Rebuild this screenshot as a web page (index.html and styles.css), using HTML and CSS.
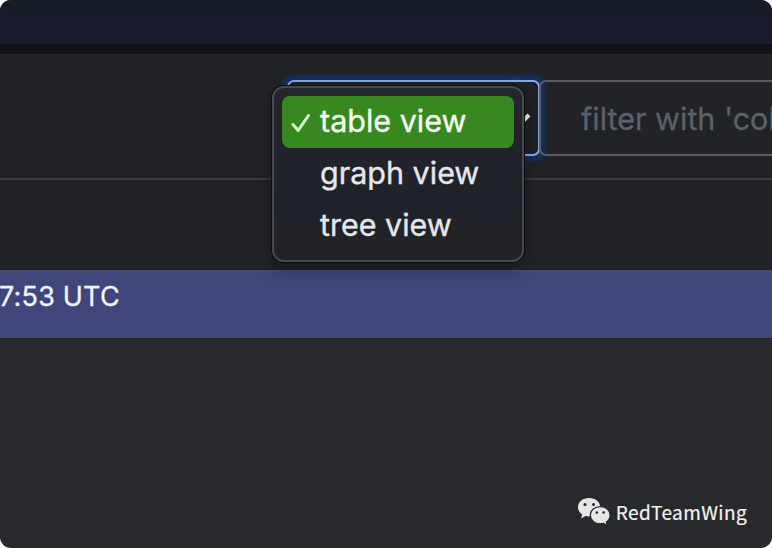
FILE: index.html
```html
<!DOCTYPE html>
<html lang="en">
<head>
<meta charset="utf-8">
<title>Table view</title>
<link rel="stylesheet" href="styles.css">
</head>
<body>
<div class="window">
  <header class="topbar"></header>
  <div class="toolbar">
    <div class="select">
      <svg class="chevron" viewBox="0 0 22 14" width="22" height="14"><path d="M2 2l9 9 9-9" fill="none" stroke="#f4f4f4" stroke-width="4"/></svg>
      <div class="menu">
        <div class="option selected">
          <svg class="check" viewBox="0 0 20 20" width="20" height="20"><path d="M2 11.500l5.200 6L17.500 2.500" fill="none" stroke="#dcffd2" stroke-width="3" stroke-linecap="round" stroke-linejoin="round"/></svg>
          <span class="label">table view</span>
        </div>
        <div class="option"><span class="label">graph view</span></div>
        <div class="option"><span class="label">tree view</span></div>
      </div>
    </div>
    <div class="filter"><span class="placeholder">filter with 'col</span></div>
  </div>
  <div class="spacer"></div>
  <div class="row"><span class="time">7:53 UTC</span></div>
  <main class="content">
    <div class="brand">
      <svg class="logo" viewBox="0 0 34 30" width="34" height="30">
        <path d="M12 1C5.400 1 1 5.200 1 10.300c0 3 1.600 5.600 4.200 7.300L4 21.500l4.500-2.500c1.100.3 2.300.4 3.500.4 6.600 0 11.300-4 11.300-9.100S18.600 1 12 1z" fill="#e6e6e6"/>
        <path d="M23.300 9.600c-5.500 0-10 3.700-10 8.600s4.400 8.600 10 8.600c1.200 0 2.300-.2 3.300-.5l3.700 2.200-.9-3.600c2.300-1.600 3.700-3.900 3.700-6.700 0-4.900-4.300-8.600-9.800-8.600z" fill="#e6e6e6" stroke="#28292d" stroke-width="1.200"/>
        <g fill="#28292d"><circle cx="8" cy="7.500" r="1.500"/><circle cx="16.500" cy="7.500" r="1.500"/><circle cx="19.800" cy="15.500" r="1.300"/><circle cx="26.600" cy="15.500" r="1.300"/></g>
      </svg>
      <span class="name">RedTeamWing</span>
    </div>
  </main>
</div>
</body>
</html>
```
FILE: styles.css
```css
* { box-sizing: border-box; }
body { margin: 0; background: #fff; font-family: Inter, "Liberation Sans", sans-serif; }
.window { display: flex; flex-direction: column; height: 548px; overflow: hidden; border-radius: 11px; background: #28292d; }
.topbar { flex: none; height: 54px; background: linear-gradient(#161b28, #191a2b); border-bottom: 10px solid #111215; }
.toolbar { flex: none; display: flex; height: 126px; padding: 25px 0 0 287px; background: #222327; border-top: 1px solid #292a2d; border-bottom: 2px solid #3b3c40; }
.select { position: relative; z-index: 3; flex: none; display: flex; align-items: center; justify-content: flex-end; width: 253px; height: 76px; padding-right: 7px; border: 2px solid #86abe8; border-radius: 7px; background: #202126; box-shadow: 0 0 3px 5px #17305f; }
.chevron { margin-top: 4px; }
.filter { position: relative; z-index: 4; flex: none; display: flex; align-items: center; width: 260px; height: 76px; margin-left: -1px; padding: 2px 0 0 40px; border: 2px solid #5c5d61; border-radius: 7px; white-space: nowrap; }
.placeholder { color: #5c6068; font-size: 30.5px; line-height: 38px; -webkit-text-stroke: .3px #5c6068; }
.menu { position: absolute; left: -17px; top: 4px; width: 252px; height: 176px; padding: 8px; border: 2px solid #48494d; border-radius: 12px; background: linear-gradient(#24252d, #22232a 45%, #1f222b 70%, #222326 85%); box-shadow: 0 0 0 1px #0c0d10, 0 5px 18px rgba(0,0,0,.35); }
.option { display: flex; align-items: center; height: 52px; padding: 0 0 2px 38px; border-radius: 8px; color: #e6e7eb; font-size: 30.5px; line-height: 38px; white-space: nowrap; }
.selected { padding-left: 9px; background: #388820; color: #f3fff0; }
.check { flex: none; margin: 3px 9px 0 0; }
.label { -webkit-text-stroke: .35px currentColor; }
.spacer { flex: none; height: 90px; background: #222327; }
.row { flex: none; height: 69px; padding-top: 8px; border-top: 2px solid #474c70; border-bottom: 1px solid #202229; background: #40457b; }
.time { display: block; margin-left: -1px; color: #f2f5ff; font-size: 27px; line-height: 34px; letter-spacing: 0.2px; -webkit-text-stroke: .3px #f2f5ff; }
.content { flex: 1; display: flex; align-items: flex-end; justify-content: flex-end; padding: 0 25px 21px 0; }
.brand { display: flex; align-items: center; gap: 5px; }
.name { margin-top: -1px; color: #f2f2f2; font-family: "Noto Sans CJK SC", "Noto Sans", sans-serif; font-size: 19px; line-height: 30px; letter-spacing: 0.4px; -webkit-text-stroke: .2px #f2f2f2; }
```
